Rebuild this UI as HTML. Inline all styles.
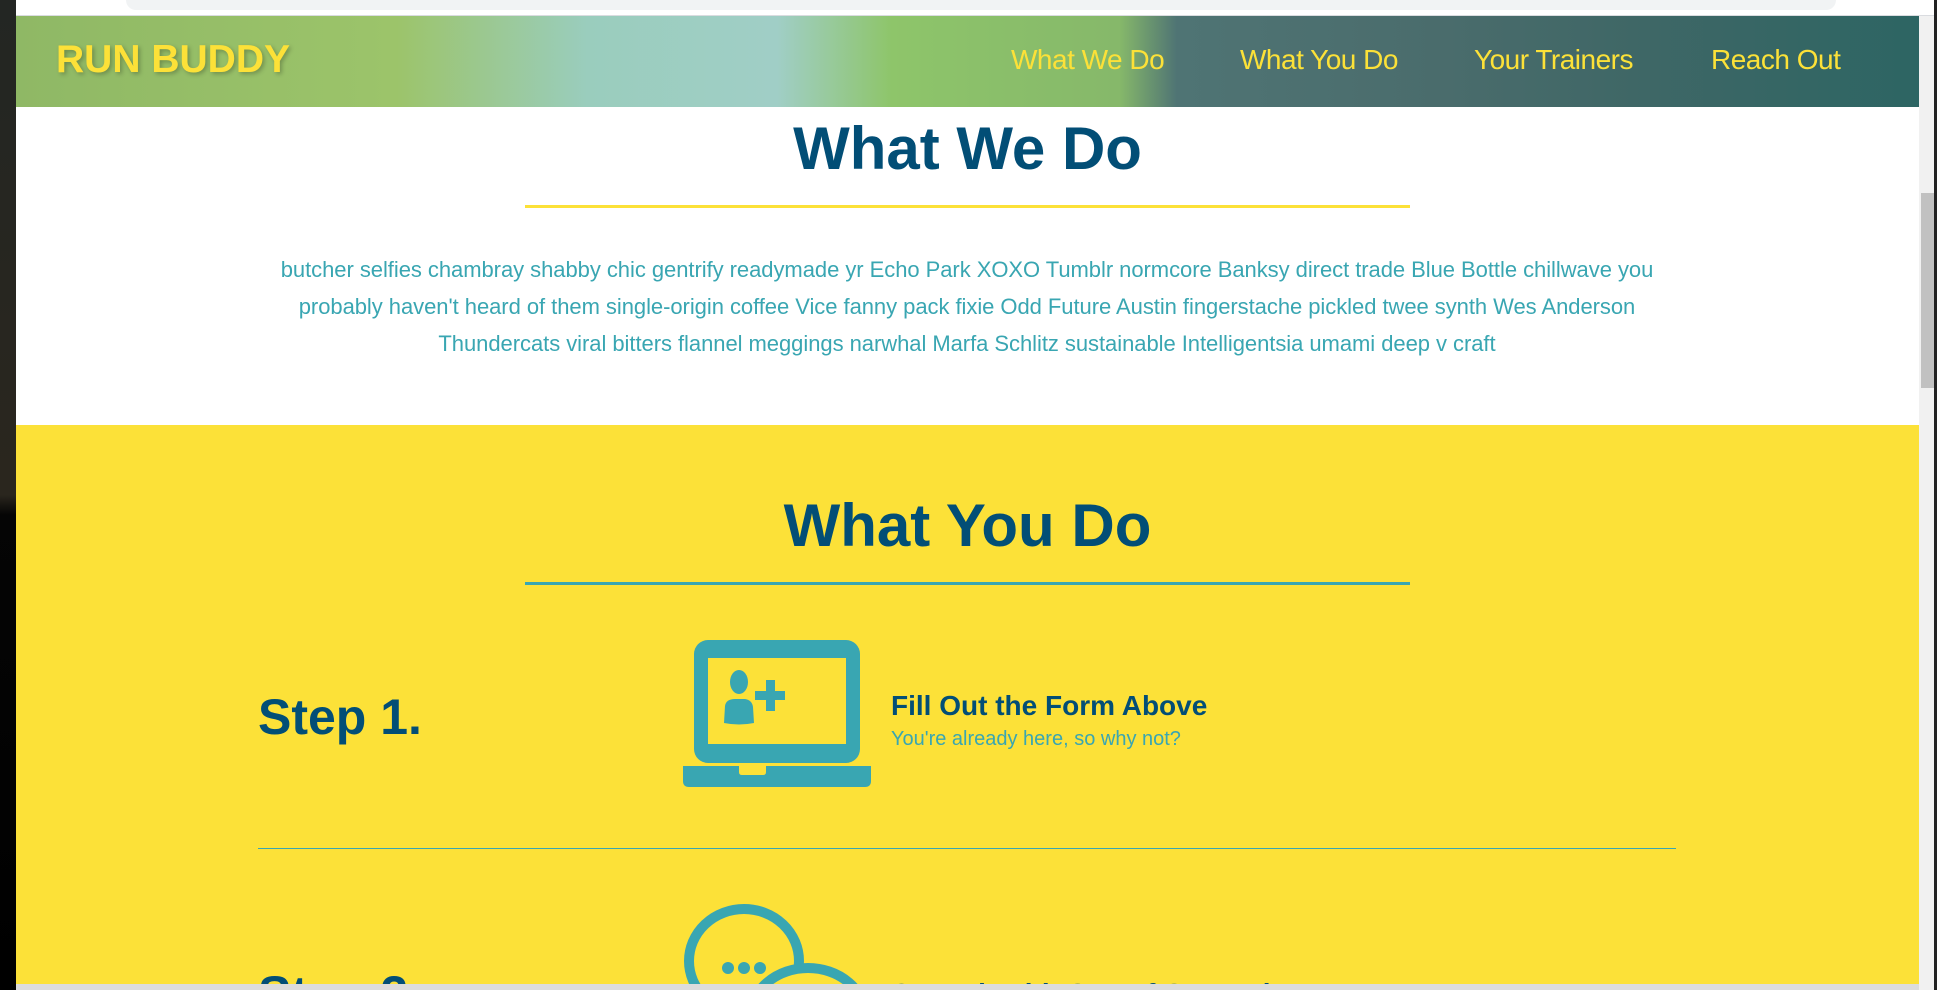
<!DOCTYPE html>
<html><head><meta charset="utf-8"><style>
*{margin:0;padding:0;box-sizing:border-box}
html,body{width:1937px;height:990px;overflow:hidden;background:#000;font-family:"Liberation Sans",Arial,sans-serif}
#left{position:absolute;left:0;top:0;width:16px;height:990px;background:linear-gradient(#232623 0,#2a261e 50%,#050505 52%,#000 100%)}
#chrome{position:absolute;left:16px;top:0;width:1921px;height:16px;background:#fff;border-bottom:1px solid #dadce0}
#addr{position:absolute;left:110px;top:-10px;width:1710px;height:20px;background:#f1f3f4;border-radius:10px}
#page{position:absolute;left:16px;top:16px;width:1903px;height:968px;background:#fff;overflow:hidden}
header{position:absolute;left:0;top:0;width:1903px;height:91px;background:linear-gradient(90deg,#8fb865 0%,#9cc46a 20%,#9acdbd 30%,#a0cec6 40%,#8ec56a 46%,#86b86a 58%,#4f7474 61%,#4a6c6c 75%,#3f6766 85%,#2d6563 100%)}
.logo{position:absolute;left:40px;top:22px;font-size:39px;font-weight:bold;color:#fce138;text-shadow:2px 2px 4px rgba(0,0,0,.25)}
nav a{position:absolute;top:28px;font-size:28px;letter-spacing:-0.5px;color:#fce138;text-decoration:none}
h2{position:absolute;width:1903px;text-align:center;color:#024e76;font-weight:bold;font-size:60px}
.line{position:absolute;left:509px;width:885px;height:3px}
#p{position:absolute;left:246px;width:1410px;top:235px;text-align:center;color:#39a6b2;font-size:22px;letter-spacing:-0.05px;line-height:37px}
#yellow{position:absolute;left:0;top:409px;width:1903px;height:600px;background:#fce138}
.step{position:absolute;left:242px;font-size:50px;font-weight:bold;color:#024e76}
.t{position:absolute;left:875px;font-size:28px;font-weight:bold;color:#024e76}
.s{position:absolute;left:875px;font-size:20px;color:#39a6b2}
#hbar{position:absolute;left:16px;top:984px;width:1903px;height:6px;background:#dcdcdc}
#vbar{position:absolute;left:1919px;top:16px;width:15px;height:974px;background:#f1f1f1}
#thumb{position:absolute;left:1921px;top:193px;width:13px;height:195px;background:#c1c1c1}
#redge{position:absolute;left:1934px;top:0;width:3px;height:990px;background:#222}
</style></head><body>
<div id="left"></div>
<div id="chrome"><div id="addr"></div></div>
<div id="page">
<header>
<div class="logo">RUN BUDDY</div>
<nav><a style="left:995px">What We Do</a><a style="left:1224px">What You Do</a><a style="left:1458px">Your Trainers</a><a style="left:1695px">Reach Out</a></nav>
</header>
<h2 style="top:98px">What We Do</h2>
<div class="line" style="top:189px;background:#fce138"></div>
<div id="p">butcher selfies chambray shabby chic gentrify readymade yr Echo Park XOXO Tumblr normcore Banksy direct trade Blue Bottle chillwave you probably haven't heard of them single-origin coffee Vice fanny pack fixie Odd Future Austin fingerstache pickled twee synth Wes Anderson Thundercats viral bitters flannel meggings narwhal Marfa Schlitz sustainable Intelligentsia umami deep v craft</div>
<div id="yellow">
<h2 style="top:66px">What You Do</h2>
<div class="line" style="top:157px;background:#39a6b2"></div>
<div class="step" style="top:263px">Step 1.</div>
<svg style="position:absolute;left:667px;top:215px" width="188" height="150" viewBox="0 0 188 150">
<rect x="11" y="0" width="166" height="123" rx="14" fill="#39a6b2"/>
<rect x="25" y="18" width="138" height="86" fill="#fce138"/>
<ellipse cx="56" cy="42" rx="9" ry="12" fill="#39a6b2"/>
<path d="M42 66 Q43 59 52 59 L62 59 Q69 60 70 67 L71 83 Q56 86 41 83 Z" fill="#39a6b2"/>
<rect x="83" y="40" width="9" height="31" fill="#39a6b2"/>
<rect x="72" y="51" width="30" height="9" fill="#39a6b2"/>
<path d="M0 126 L56 126 L56 132 Q56 135 59 135 L80 135 Q83 135 83 132 L83 126 L188 126 L188 141 Q188 147 182 147 L6 147 Q0 147 0 141 Z" fill="#39a6b2"/>
</svg>
<div class="t" style="top:265px">Fill Out the Form Above</div>
<div class="s" style="top:303px">You're already here, so why not?</div>
<div style="position:absolute;left:242px;top:423px;width:1418px;height:1px;background:#39a6b2"></div>
<svg style="position:absolute;left:667px;top:478px" width="200" height="120" viewBox="0 0 200 120">
<ellipse cx="61" cy="58" rx="55" ry="52" fill="none" stroke="#39a6b2" stroke-width="10"/>
<ellipse cx="125" cy="115" rx="58" ry="50" fill="#fce138" stroke="#39a6b2" stroke-width="10"/>
<circle cx="45" cy="65" r="6" fill="#39a6b2"/><circle cx="61" cy="65" r="6" fill="#39a6b2"/><circle cx="77" cy="65" r="6" fill="#39a6b2"/>
</svg>
<div class="step" style="top:540px">Step 2.</div>
<div class="t" style="top:553px">Consult with One of Our Trainers</div>
</div>
</div>
<div id="hbar"></div>
<div id="vbar"></div><div id="thumb"></div>
<div id="redge"></div>
</body></html>
